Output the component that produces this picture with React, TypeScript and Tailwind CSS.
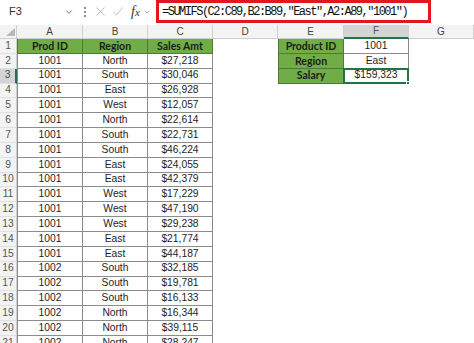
import { ChevronDown } from 'lucide-react';

const data: [string, string, string][] = [
  ['1001', 'North', '$27,218'],
  ['1001', 'South', '$30,046'],
  ['1001', 'East', '$26,928'],
  ['1001', 'West', '$12,057'],
  ['1001', 'North', '$22,614'],
  ['1001', 'South', '$22,731'],
  ['1001', 'South', '$46,224'],
  ['1001', 'East', '$24,055'],
  ['1001', 'East', '$42,379'],
  ['1001', 'West', '$17,229'],
  ['1001', 'West', '$47,190'],
  ['1001', 'West', '$29,238'],
  ['1001', 'East', '$21,774'],
  ['1001', 'East', '$44,187'],
  ['1002', 'South', '$32,185'],
  ['1002', 'South', '$19,781'],
  ['1002', 'South', '$16,133'],
  ['1002', 'North', '$16,344'],
  ['1002', 'North', '$39,115'],
  ['1002', 'North', '$28,247'],
];

const lookup: [string, string][] = [
  ['Product ID', '1001'],
  ['Region', 'East'],
  ['Salary', '$159,323'],
];

const cols = ['A', 'B', 'C', 'D', 'E', 'F', 'G'];
const colWidth = ['w-[66px]', 'w-[65px]', 'w-[65px]', 'w-[65px]', 'w-[66px]', 'w-[65px]', 'w-[65px]'];

// header cells use Lato bold, it sits closer to Calibri's narrow bold than Liberation does
const greenCell =
  "bg-[#70ad47] border-r border-b border-[#4f7a35] font-['Lato',sans-serif] font-bold text-[10.5px] text-[#1c1c1c] flex items-center justify-center";
const whiteCell =
  'bg-white border-r border-b border-[#8c8c8c] text-[#1e1e1e] flex items-center justify-center';

function FormulaBar() {
  return (
    <div className="flex h-[23px] items-center">
      <div className="flex h-[21px] w-[80px] items-center pl-[9px] pr-[6px]">
        <span className="text-[11px] text-[#333]">F3</span>
        <ChevronDown className="ml-auto h-[10px] w-[10px] text-[#555]" strokeWidth={2} />
      </div>
      <div className="flex w-[10px] flex-col items-center gap-[2px]">
        <span className="h-[2px] w-[2px] rounded-full bg-[#666]" />
        <span className="h-[2px] w-[2px] rounded-full bg-[#666]" />
        <span className="h-[2px] w-[2px] rounded-full bg-[#666]" />
      </div>
      <svg className="ml-[6px]" width="9" height="9" viewBox="0 0 9 9">
        <path d="M0.5 0.5 L8.5 8.5 M8.5 0.5 L0.5 8.5" stroke="#bdbdbd" strokeWidth="1" fill="none" />
      </svg>
      <svg className="ml-[8px]" width="10" height="9" viewBox="0 0 10 9">
        <path d="M0.5 5 L3.5 8 L9.5 0.5" stroke="#bdbdbd" strokeWidth="1" fill="none" />
      </svg>
      <span className="ml-[8px] w-[10px] font-['Liberation_Serif',serif] text-[14px] italic leading-none text-[#333]">
        f<span className="text-[11px]">x</span>
      </span>
      <ChevronDown className="ml-[2px] h-[8px] w-[8px] text-[#777]" strokeWidth={2} />
      <div className="ml-[5px] flex h-[23px] w-[275px] items-center border-[3px] border-[#e3171f] pl-[3px]">
        <span className="whitespace-nowrap font-['Liberation_Mono',monospace] text-[12px] tracking-[-1.5px] text-[#111]">
          =SUMIFS(C2:C89,B2:B89,"East",A2:A89,"1001")
        </span>
      </div>
    </div>
  );
}

function ColumnHeaders() {
  return (
    <div className="flex h-[14px]">
      <div className="relative w-[17px] border-r border-b border-[#d0d0d0] bg-[#f3f3f3]">
        <svg className="absolute right-[1px] bottom-[2px]" width="9" height="8" viewBox="0 0 9 8">
          <path d="M9 0 L9 8 L0 8 Z" fill="#b8b8b8" />
        </svg>
      </div>
      {cols.map((c, i) => (
        <div
          key={c}
          className={`${colWidth[i]} flex items-center justify-center border-r text-[10px] leading-none ${
            c === 'F'
              ? 'border-b-2 border-r-[#d0d0d0] border-b-[#217346] bg-[#d4d4d4] text-[#555]'
              : 'border-b border-[#d0d0d0] bg-[#f3f3f3] text-[#444]'
          }`}
        >
          {c}
        </div>
      ))}
    </div>
  );
}

function SheetRow({ n, cells }: { n: number; cells: [string, string, string] | null }) {
  const active = n === 3;
  const look = n <= 3 ? lookup[n - 1] : null;
  const isHead = n === 1;
  return (
    <div className="flex h-[14.85px] text-[10.3px] leading-none">
      <div
        className={`flex w-[17px] items-center justify-center border-b border-[#e0e0e0] ${
          active ? 'border-r-2 border-r-[#217346] bg-[#d4d4d4] text-[#3c5e44]' : 'border-r border-r-[#d0d0d0] bg-[#f3f3f3] text-[#555]'
        }`}
      >
        {n}
      </div>
      {isHead ? (
        <>
          <div className={`w-[66px] border-l ${greenCell}`}>Prod ID</div>
          <div className={`w-[65px] ${greenCell}`}>Region</div>
          <div className={`w-[65px] ${greenCell}`}>Sales Amt</div>
        </>
      ) : (
        <>
          <div className={`w-[66px] border-l ${whiteCell}`}>{cells?.[0]}</div>
          <div className={`w-[65px] ${whiteCell}`}>{cells?.[1]}</div>
          <div className={`w-[65px] ${whiteCell}`}>{cells?.[2]}</div>
        </>
      )}
      <div className="w-[65px] bg-white" />
      {look ? (
        <>
          <div className={`w-[66px] border-l ${greenCell}`}>{look[0]}</div>
          <div className={`relative w-[65px] ${whiteCell}`}>
            {look[1]}
            {active && (
              <div className="absolute -top-[1px] -left-[1px] -right-[1px] -bottom-[1px] border-2 border-[#217346]">
                <span className="absolute -right-[3px] -bottom-[3px] h-[4px] w-[4px] border border-white bg-[#217346]" />
              </div>
            )}
          </div>
        </>
      ) : (
        <>
          <div className="w-[66px] bg-white" />
          <div className="w-[65px] bg-white" />
        </>
      )}
      <div className="w-[65px] bg-white" />
    </div>
  );
}

export default function App() {
  return (
    <div className="h-[343px] w-[474px] overflow-hidden bg-white font-['Liberation_Sans',Arial,sans-serif]">
      <FormulaBar />
      <div className="mt-[2px]">
        <ColumnHeaders />
        <SheetRow n={1} cells={null} />
        {data.map((r, i) => (
          <SheetRow key={i} n={i + 2} cells={r} />
        ))}
      </div>
    </div>
  );
}
